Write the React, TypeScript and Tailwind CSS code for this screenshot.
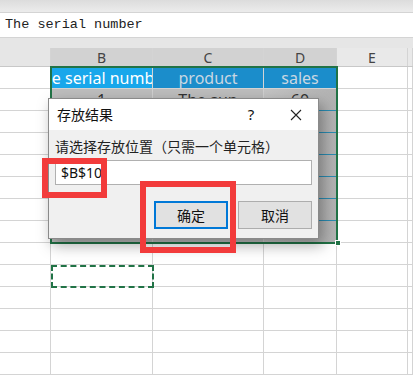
import React from "react";

const cols = [51, 102, 111, 73, 71, 5];
const rowLine = "border-b border-[#d4d4d4]";

function Cell({ w, className = "", children }: { w: number; className?: string; children?: React.ReactNode }) {
  return (
    <div
      className={`shrink-0 h-full flex items-center justify-center overflow-hidden whitespace-nowrap border-r border-[#d4d4d4] ${className}`}
      style={{ width: w }}
    >
      {children}
    </div>
  );
}

export default function App() {
  const dataRows = [
    ["1", "The sun", "60"],
    ["", "", ""],
    ["", "", ""],
    ["", "", ""],
    ["", "", ""],
    ["", "", ""],
    ["", "", ""],
  ];
  return (
    <div
      className="relative w-[413px] h-[378px] overflow-hidden bg-white"
      style={{ fontFamily: '"Noto Sans", "Noto Sans CJK SC", sans-serif' }}
    >
      {/* top band */}
      <div className="h-[12px] bg-gradient-to-b from-[#dcdcdc] to-[#ececec]" />
      {/* formula bar */}
      <div className="h-[26px] bg-white border-y border-[#d4d4d4] flex items-center pl-[5px] text-[13.5px] text-[#222]" style={{ fontFamily: '"Liberation Mono", monospace' }}>
        The serial number
      </div>
      <div className="h-[10px] bg-[#e6e6e6]" />
      {/* column headers */}
      <div className="h-[19px] flex border-b border-[#c8c8c8] text-[14px] text-[#444]">
        <Cell w={cols[0]} className="bg-[#e6e6e6] border-[#c8c8c8]" />
        <Cell w={cols[1]} className="bg-[#d2d2d2] border-[#bdbdbd]">B</Cell>
        <Cell w={cols[2]} className="bg-[#d2d2d2] border-[#bdbdbd]">C</Cell>
        <Cell w={cols[3]} className="bg-[#d2d2d2] border-[#bdbdbd]">D</Cell>
        <Cell w={cols[4]} className="bg-[#e9e9e9] border-[#c8c8c8]">E</Cell>
        <Cell w={cols[5]} className="bg-[#e9e9e9]" />
      </div>
      {/* row 1 */}
      <div className={`h-[22px] flex ${rowLine} text-[16px]`}>
        <Cell w={cols[0]} />
        <Cell w={cols[1]} className="bg-[#18a7eb] text-white border-[#6cc6f2]">The serial number</Cell>
        <Cell w={cols[2]} className="bg-[#1b8dcb] text-[#c9d7e2] border-[#6cb2dc]">product</Cell>
        <Cell w={cols[3]} className="bg-[#1b8dcb] text-[#c9d7e2]">sales</Cell>
        <Cell w={cols[4]} />
        <Cell w={cols[5]} />
      </div>
      {dataRows.map((r, i) => (
        <div key={i} className="h-[22px] flex text-[16px] text-[#333]">
          <Cell w={cols[0]} className={rowLine} />
          <Cell w={cols[1]} className="bg-[#bdbdbd] border-b border-b-[#2a8db3] border-r-[#d0d0d0]">{r[0]}</Cell>
          <Cell w={cols[2]} className="bg-[#bdbdbd] border-b border-b-[#2a8db3] border-r-[#d0d0d0]">{r[1]}</Cell>
          <Cell w={cols[3]} className="bg-gradient-to-r from-[#c4c4c4] to-[#b2b2b2] border-b border-b-[#2a8db3]">{r[2]}</Cell>
          <Cell w={cols[4]} className={rowLine} />
          <Cell w={cols[5]} className={rowLine} />
        </div>
      ))}
      {Array.from({ length: 6 }).map((_, i) => (
        <div key={"e" + i} className="h-[22px] flex">
          {cols.map((w, j) => (
            <Cell key={j} w={w} className={rowLine} />
          ))}
        </div>
      ))}

      {/* selection border */}
      <div className="absolute left-[50px] top-[66px] w-[288px] h-[178px] border-2 border-[#217346]" />
      <div className="absolute left-[335px] top-[240px] w-[6px] h-[6px] bg-[#217346] border border-white" />
      {/* dashed copy box */}
      <div className="absolute left-[51px] top-[265px] w-[103px] h-[23px] border-2 border-dashed border-[#217346]" />

      {/* dialog */}
      <div className="absolute left-[48px] top-[98px] w-[271px] h-[141px] border border-[#8a8a8a] bg-[#f0f0f0] shadow-[4px_6px_14px_rgba(0,0,0,0.35)] flex flex-col">
        <div className="h-[31px] bg-white flex items-center pl-[8px] text-[14px] text-[#111]">
          <span className="flex-1">存放结果</span>
          <span className="w-[30px] text-center text-[15px] mr-[15px]">?</span>
          <span className="w-[30px] flex justify-center mr-[7px]">
            <svg width="12" height="12" viewBox="0 0 12 12">
              <path d="M1 1 L11 11 M11 1 L1 11" stroke="#222" strokeWidth="1.1" />
            </svg>
          </span>
        </div>
        <div className="flex flex-col px-[6px]">
          <div className="h-[30px] pt-[6px] text-[14px] text-[#222] leading-[22px]">请选择存放位置（只需一个单元格）</div>
          <div className="h-[25px] bg-white border border-[#b0b0b0] flex items-center pl-[5px] text-[14px] text-[#111]">$B$10</div>
          <div className="flex justify-end gap-[10px] mt-[16px] pr-[0px]">
            <button className="w-[74px] h-[28px] bg-[#e1e1e1] border-2 border-[#0078d7] text-[14px] text-[#111]">确定</button>
            <button className="w-[74px] h-[28px] bg-[#e1e1e1] border border-[#adadad] text-[14px] text-[#111]">取消</button>
          </div>
        </div>
      </div>

      {/* red highlight boxes */}
      <div className="absolute left-[42px] top-[158px] w-[65px] h-[40px] border-[6px] border-[#f23b3b]" />
      <div className="absolute left-[140px] top-[181px] w-[96px] h-[72px] border-[6px] border-[#f23b3b]" />
    </div>
  );
}
